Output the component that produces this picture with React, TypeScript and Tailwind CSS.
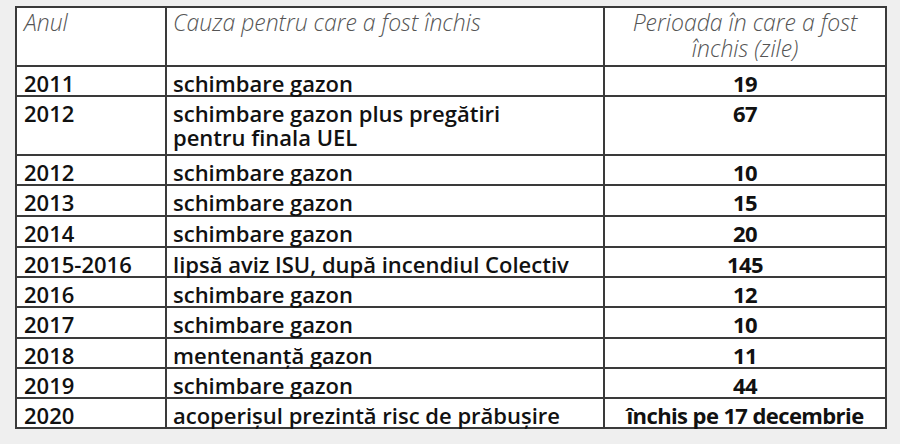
import React from "react";

type Row = { year: string; cause: React.ReactNode; days: string; h: string };

const rows: Row[] = [
  { year: "2011", cause: "schimbare gazon", days: "19", h: "h-[30px]" },
  {
    year: "2012",
    cause: (
      <>
        schimbare gazon plus pregătiri
        <br />
        pentru finala UEL
      </>
    ),
    days: "67",
    h: "h-[59px]",
  },
  { year: "2012", cause: "schimbare gazon", days: "10", h: "h-[30px]" },
  { year: "2013", cause: "schimbare gazon", days: "15", h: "h-[31px]" },
  { year: "2014", cause: "schimbare gazon", days: "20", h: "h-[31px]" },
  { year: "2015-2016", cause: "lipsă aviz ISU, după incendiul Colectiv", days: "145", h: "h-[30px]" },
  { year: "2016", cause: "schimbare gazon", days: "12", h: "h-[29px]" },
  { year: "2017", cause: "schimbare gazon", days: "10", h: "h-[31px]" },
  { year: "2018", cause: "mentenanță gazon", days: "11", h: "h-[30px]" },
  { year: "2019", cause: "schimbare gazon", days: "44", h: "h-[30px]" },
  { year: "2020", cause: "acoperișul prezintă risc de prăbușire", days: "închis pe 17 decembrie", h: "h-[30px]" },
];

export default function App() {
  return (
    <div className="w-[900px] h-[444px] bg-[#efefef] pt-[6px] pl-[15px] font-['Open_Sans',sans-serif]">
      <table className="border-collapse bg-white border-2 border-[#3a3a3a] w-[870px] table-fixed">
        <colgroup>
          <col className="w-[150px]" />
          <col className="w-[438px]" />
          <col className="w-[282px]" />
        </colgroup>
        <thead>
          <tr className="h-[59px] align-top italic font-light text-[#555] text-[23px] leading-[26px]">
            <td className="border-2 border-[#3a3a3a] px-[7px] pt-[1px]">Anul</td>
            <td className="border-2 border-[#3a3a3a] px-[6px] pt-[1px]">Cauza pentru care a fost închis</td>
            <td className="border-2 border-[#3a3a3a] px-[8px] pt-[1px] text-center">
              Perioada în care a fost
              <br />
              închis (zile)
            </td>
          </tr>
        </thead>
        <tbody>
          {rows.map((r, i) => (
            <tr key={i} className={`${r.h} align-top text-[22px] leading-[24px] text-[#111]`}>
              <td className="border-2 border-[#3a3a3a] px-[7px] pt-[4px] font-semibold">{r.year}</td>
              <td className="border-2 border-[#3a3a3a] px-[6px] pt-[4px] font-semibold">{r.cause}</td>
              <td className="border-2 border-[#3a3a3a] px-[4px] pt-[4px] font-bold text-center tracking-[-0.6px]">
                {r.days}
              </td>
            </tr>
          ))}
        </tbody>
      </table>
    </div>
  );
}
